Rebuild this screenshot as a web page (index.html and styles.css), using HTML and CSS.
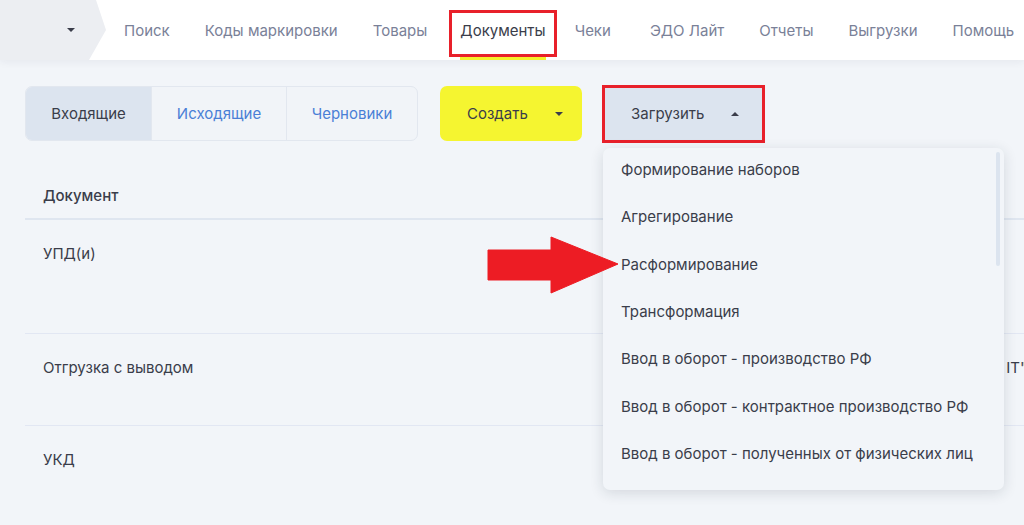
FILE: index.html
```html
<!DOCTYPE html>
<html lang="ru">
<head>
<meta charset="utf-8">
<title>Документы</title>
<link rel="stylesheet" href="styles.css">
</head>
<body>
<header class="topbar">
  <div class="brand"><span class="caret down dark"></span></div>
  <nav class="nav">
    <a class="nav-link">Поиск</a>
    <a class="nav-link">Коды маркировки</a>
    <a class="nav-link">Товары</a>
    <a class="nav-link active marked">Документы</a>
    <a class="nav-link">Чеки</a>
    <a class="nav-link">ЭДО Лайт</a>
    <a class="nav-link">Отчеты</a>
    <a class="nav-link">Выгрузки</a>
    <a class="nav-link">Помощь</a>
  </nav>
</header>

<main class="main">
  <div class="toolbar">
    <div class="segmented">
      <button class="seg active">Входящие</button>
      <button class="seg">Исходящие</button>
      <button class="seg">Черновики</button>
    </div>
    <button class="btn btn-yellow">Создать <span class="caret down dark"></span></button>
    <div class="upload-wrap">
      <button class="btn btn-grey marked-box">Загрузить <span class="caret up dark"></span></button>
      <div class="dropdown">
        <ul class="menu">
          <li>Формирование наборов</li>
          <li>Агрегирование</li>
          <li>Расформирование</li>
          <li>Трансформация</li>
          <li>Ввод в оборот - производство РФ</li>
          <li>Ввод в оборот - контрактное производство РФ</li>
          <li>Ввод в оборот - полученных от физических лиц</li>
        </ul>
        <div class="scrollbar"></div>
      </div>
    </div>
  </div>

  <div class="table">
    <div class="thead">Документ</div>
    <div class="row tall"><span class="cell">УПД(и)</span></div>
    <div class="row"><span class="cell">Отгрузка с выводом</span><span class="cell right">ООО "СОФТ IT"</span></div>
    <div class="row"><span class="cell">УКД</span></div>
  </div>

  <svg class="arrow" width="132" height="58" viewBox="0 0 132 58">
    <path d="M1 14 H64 V1 L131 28 L64 57 V44 H1 Z" fill="#ed1c24" stroke="#ed1c24" stroke-width="1" stroke-linejoin="round"/>
  </svg>
</main>
</body>
</html>
```
FILE: styles.css
```css
* { box-sizing: border-box; }
html, body { margin: 0; padding: 0; }
body {
  width: 1024px;
  height: 525px;
  overflow: hidden;
  background: #f2f5f9;
  font-family: Inter, "Noto Sans", sans-serif;
  font-size: 15px;
  color: #3a3d4a;
  position: relative;
}

.topbar {
  height: 60px;
  background: #ffffff;
  display: flex;
  align-items: stretch;
  box-shadow: 0 2px 8px rgba(30, 40, 60, 0.06);
  position: relative;
  z-index: 2;
}
.brand {
  width: 107px;
  flex: none;
  background: #eceef2;
  clip-path: polygon(0 0, 96px 0, 106px 50%, 89px 100%, 0 100%);
  display: flex;
  align-items: center;
  padding-left: 67px;
}
.nav {
  display: flex;
  align-items: stretch;
  margin-left: 7px;
  gap: 15px;
}
.nav-link {
  display: flex;
  align-items: center;
  padding: 0 10px;
  color: #7a8198;
  white-space: nowrap;
  position: relative;
}
.nav-link.active { color: #3a3d4a; margin: 0 -6px 0 -2px; }
.nav-link.active + .nav-link { margin-right: 4px; }
.nav-link.active::before {
  content: "";
  position: absolute;
  left: 10px; right: 10px; bottom: 0;
  height: 3px;
  background: #f5ef2a;
}
.nav-link.marked::after {
  content: "";
  position: absolute;
  left: -1px; right: -1px; top: 10px; bottom: 3px;
  border: 3px solid #e8202a;
}

.caret {
  display: inline-block;
  width: 0; height: 0;
  border-left: 4px solid transparent;
  border-right: 4px solid transparent;
}
.caret.down { border-top: 4px solid #3a3d4a; }
.caret.up { border-bottom: 4px solid #3a3d4a; }

.main { padding: 26px 0 0 25px; }

.toolbar {
  display: flex;
  align-items: center;
  height: 55px;
}
.segmented {
  display: flex;
  height: 55px;
  border: 1px solid #e2e7ef;
  border-radius: 7px;
  overflow: hidden;
  background: #f1f4f8;
}
.seg {
  font: inherit;
  border: 0;
  background: transparent;
  color: #4a7fd6;
  padding: 0;
  height: 100%;
}
.seg + .seg { border-left: 1px solid #e2e7ef; }
.seg:nth-child(2) { width: 135px; }
.seg:nth-child(3) { width: 131px; }
.seg.active { background: #dce4ef; color: #3a3d4a; width: 125px; }

.btn {
  font: inherit;
  color: #3a3d4a;
  border: 0;
  height: 55px;
  display: flex;
  align-items: center;
}
.btn-yellow {
  margin-left: 22px;
  width: 142px;
  background: #f5f530;
  border-radius: 7px;
  padding: 0 0 0 27px;
  gap: 27px;
}
.upload-wrap { margin-left: 20px; position: relative; }
.btn-grey {
  background: #dce4ef;
  width: 163px;
  height: 58px;
  padding: 0 0 0 26px;
  gap: 27px;
  border: 3px solid #e8202a;
}

.dropdown {
  position: absolute;
  left: 1px;
  top: 63.5px;
  width: 401px;
  height: 342px;
  background: #f2f5f9;
  border-radius: 7px;
  box-shadow: 0 3px 14px rgba(30, 40, 60, 0.14);
  z-index: 5;
}
.menu {
  list-style: none;
  margin: -2px 0 0 0;
  padding: 0 0 0 18px;
}
.menu li {
  height: 47.3px;
  display: flex;
  align-items: center;
  white-space: nowrap;
}
.scrollbar {
  position: absolute;
  right: 4px;
  top: 4px;
  width: 4px;
  height: 114px;
  border-radius: 2px;
  background: #dce4ef;
}

.table {
  margin-top: 29px;
  width: 1010px;
}
.thead {
  height: 50px;
  padding: 16px 0 0 18px;
  font-weight: 500;
  border-bottom: 2px solid #dfe6f0;
}
.row {
  height: 92px;
  padding: 24px 8px 0 18px;
  border-bottom: 1px solid #e2e7f3;
  display: flex;
  justify-content: space-between;
  align-items: flex-start;
}
.row.tall { height: 114px; }
.row:last-child { border-bottom: 0; }
.cell { white-space: nowrap; }

.arrow {
  position: absolute;
  left: 487px;
  top: 236px;
  z-index: 6;
}
```
